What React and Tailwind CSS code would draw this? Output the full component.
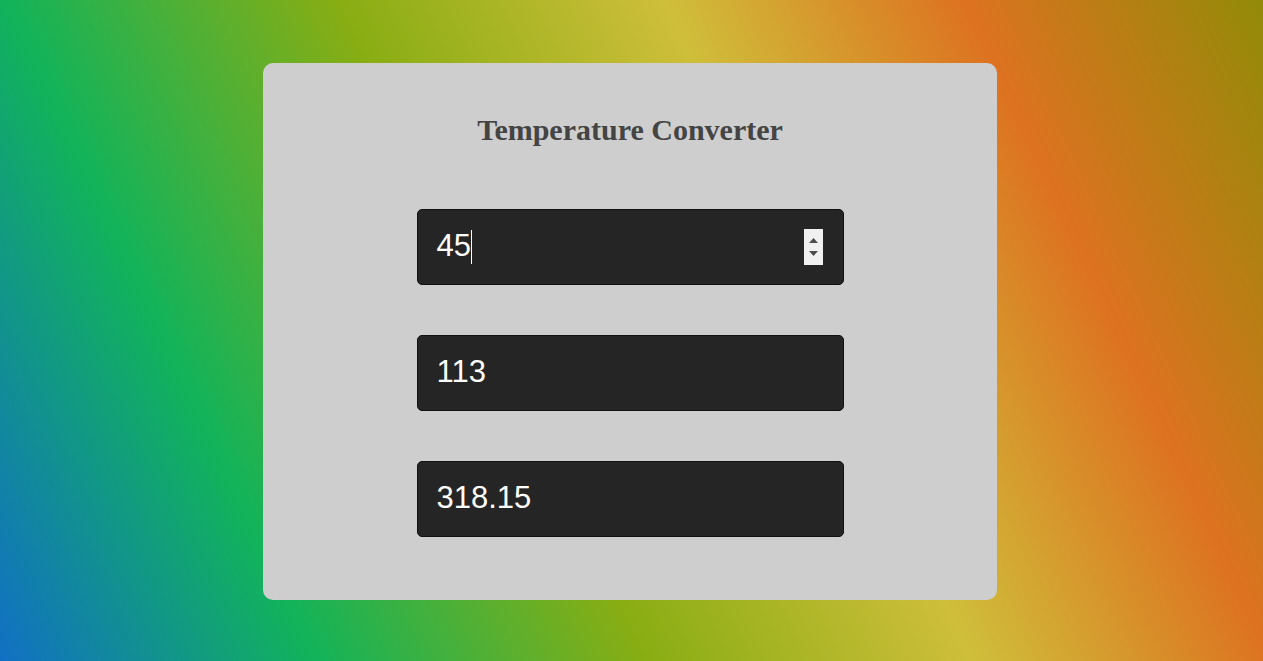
// Temperature converter card on a gradient backdrop

function Field({ value, caret, spinner }) {
  return (
    <div className="relative flex items-center w-[427px] h-[76px] px-[19px] pb-px bg-[#252525] border border-[#111] rounded-[5px] text-white text-[31px] font-['Liberation_Sans',Arial,sans-serif]">
      <span>{value}</span>
      {caret && <span className="inline-block w-px h-[34px] bg-white"></span>}
      {spinner && (
        <div className="absolute right-[20px] top-[19px] w-[19px] h-[36px] bg-[#f0f0f0] flex flex-col items-center justify-center gap-[8px]">
          <svg width="9" height="5" viewBox="0 0 9 5">
            <path d="M4.5 0L9 5H0Z" fill="#4d4d4d" />
          </svg>
          <svg width="9" height="5" viewBox="0 0 9 5">
            <path d="M0 0H9L4.5 5Z" fill="#4d4d4d" />
          </svg>
        </div>
      )}
    </div>
  )
}

export default function App() {
  return (
    <div className="min-h-screen flex items-center justify-center pr-[3px] pt-[2px] bg-[linear-gradient(65deg,#1170c4_0%,#12b35a_20%,#88ad13_41%,#cfbe3a_62%,#dd7220_81%,#928b08_100%)]">
      <div className="w-[734px] h-[537px] bg-[#cecece] rounded-[10px] flex flex-col items-center pt-[52px]">
        <h1 className="text-[30px] leading-none font-bold text-[#444] font-['Liberation_Serif','Times_New_Roman',serif]">
          Temperature Converter
        </h1>
        <div className="mt-[64px] flex flex-col gap-[50px]">
          <Field value="45" caret spinner />
          <Field value="113" />
          <Field value="318.15" />
        </div>
      </div>
    </div>
  )
}
